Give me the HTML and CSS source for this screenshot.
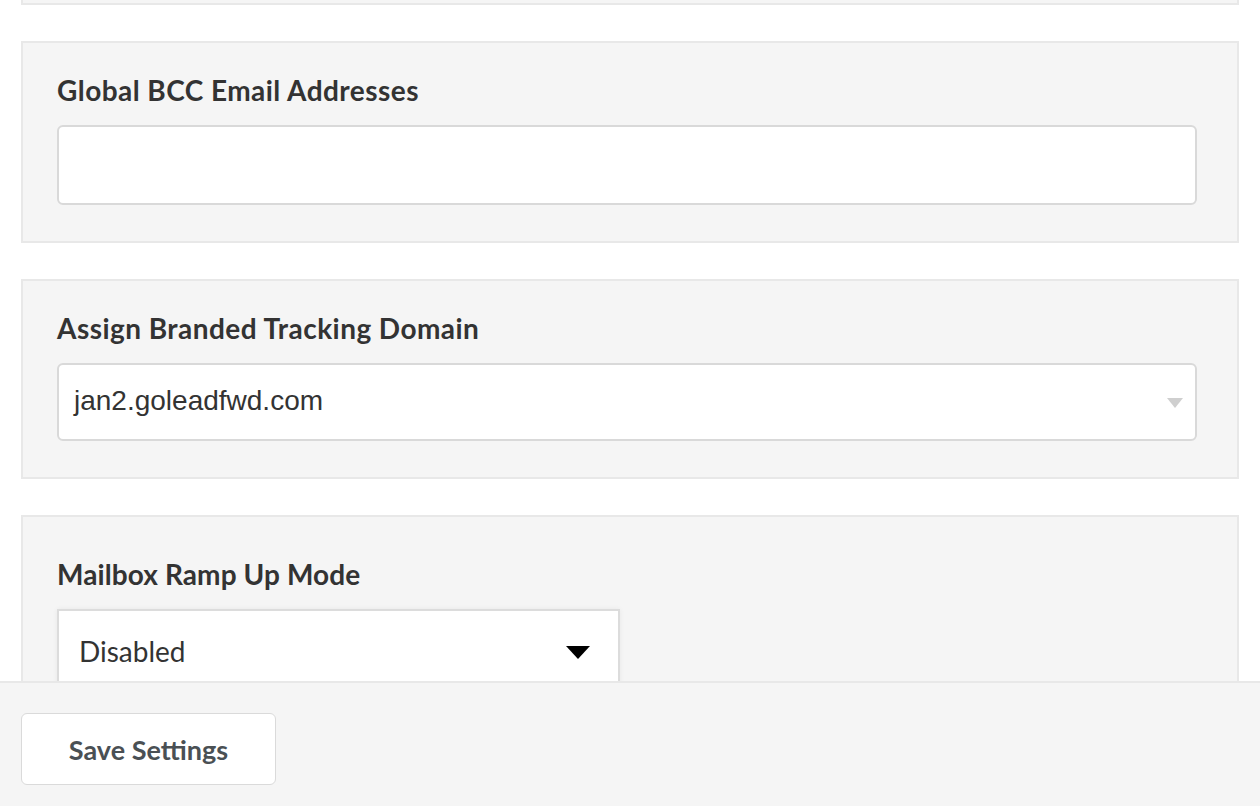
FILE: index.html
```html
<!DOCTYPE html>
<html lang="en">
<head>
<meta charset="utf-8">
<title>Settings</title>
<link rel="stylesheet" href="styles.css">
</head>
<body>
<main class="page">
  <section class="card card--tail"></section>

  <section class="card">
    <label class="field-label" for="bcc">Global BCC Email Addresses</label>
    <input class="text-input" id="bcc" type="text">
  </section>

  <section class="card">
    <div class="field-label">Assign Branded Tracking Domain</div>
    <div class="select-box">
      <span class="select-value">jan2.goleadfwd.com</span>
      <svg class="select-caret" width="16" height="10" viewBox="0 0 16 10"><path d="M0 0 H16 L8 10 Z" fill="#cfcfcf"/></svg>
    </div>
  </section>

  <section class="card card--ramp">
    <div class="field-label field-label--tight">Mailbox Ramp Up Mode</div>
    <div class="native-select">
      <span class="native-value">Disabled</span>
      <svg class="native-caret" width="24" height="13" viewBox="0 0 24 13"><path d="M0 0 H24 L12 13 Z" fill="#000"/></svg>
    </div>
  </section>
</main>

<footer class="footer">
  <button class="save-btn" type="button">Save Settings</button>
</footer>
</body>
</html>
```

FILE: styles.css
```css
* { box-sizing: border-box; }

html, body {
  margin: 0;
  padding: 0;
  background: #ffffff;
  height: 100%;
  overflow: hidden;
}

body {
  font-family: "Lato", "Open Sans", sans-serif;
  color: #333333;
}

.page {
  display: flex;
  flex-direction: column;
  gap: 36px;
  padding: 0 21px;
}

.card {
  background: #f5f5f5;
  border: 2px solid #e8e8e8;
  padding: 30px 40px 36px 34px;
  display: flex;
  flex-direction: column;
}

.card--tail {
  height: 5px;
  padding: 0;
  border-top: 0;
}

.card--ramp {
  padding-top: 40px;
  min-height: 300px;
}

.field-label {
  font-family: "Lato", sans-serif;
  font-weight: 700;
  font-size: 28px;
  line-height: 34px;
  letter-spacing: 0.45px;
  color: #333333;
  margin-bottom: 18px;
  display: block;
}

.field-label--tight {
  letter-spacing: 0.1px;
}

.text-input {
  height: 80px;
  width: 100%;
  border: 2px solid #d9d9d9;
  border-radius: 6px;
  background: #ffffff;
  outline: none;
  font-family: "Liberation Sans", Arial, sans-serif;
  font-size: 28px;
  padding: 0 16px;
}

.select-box {
  height: 78px;
  border: 2px solid #d9d9d9;
  border-radius: 6px;
  background: #ffffff;
  display: flex;
  align-items: center;
  justify-content: space-between;
  padding: 0 12px 2px 15px;
}

.select-value {
  font-family: "Liberation Sans", Arial, sans-serif;
  font-size: 28px;
  color: #333333;
}

.select-caret {
  margin-top: 4px;
}

.native-select {
  width: 563px;
  height: 90px;
  border: 2px solid #dcdcdc;
  background: #ffffff;
  box-shadow: 0 0 5px rgba(0, 0, 0, 0.06);
  display: flex;
  align-items: flex-start;
  justify-content: space-between;
  padding: 22px 28px 0 20px;
}

.native-value {
  font-family: "Lato", sans-serif;
  font-weight: 400;
  font-size: 28px;
  line-height: 36px;
  color: #333333;
}

.native-caret {
  margin-top: 13px;
}

.footer {
  position: fixed;
  left: 0;
  right: 0;
  bottom: 0;
  height: 125px;
  background: #f5f5f5;
  border-top: 2px solid #e8e8e8;
  padding: 30px 21px 0;
}

.save-btn {
  width: 255px;
  height: 72px;
  background: #ffffff;
  border: 1px solid #dadada;
  border-radius: 6px;
  font-family: "Lato", sans-serif;
  font-weight: 700;
  font-size: 27px;
  color: #4a5054;
  cursor: pointer;
}
```
